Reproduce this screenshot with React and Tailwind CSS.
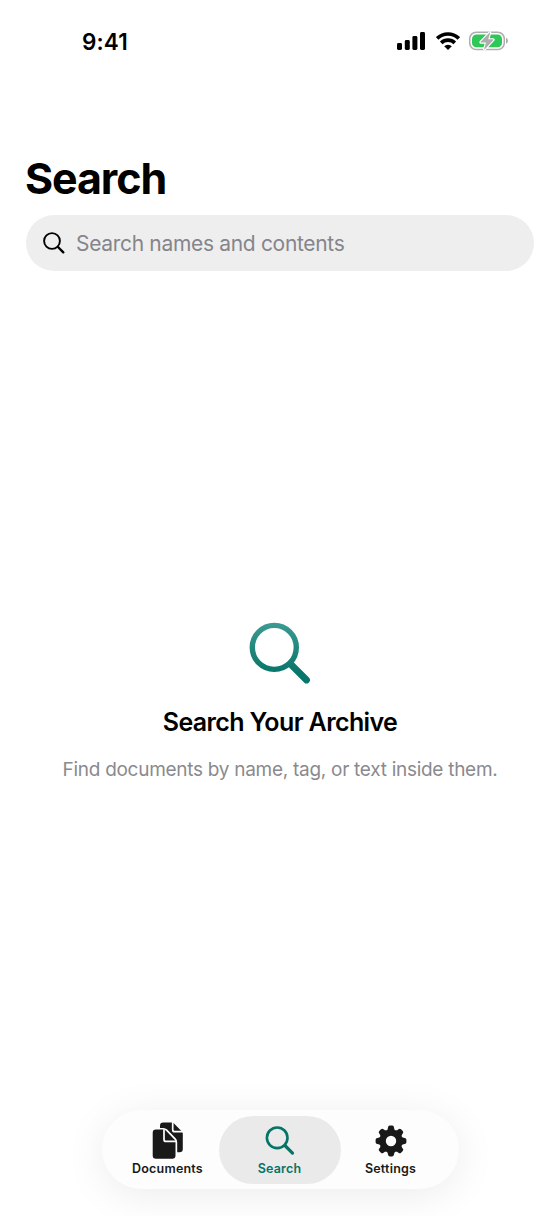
const TEETH = [0, 45, 90, 135, 180, 225, 270, 315]

function SignalIcon() {
  return (
    <svg width="29" height="18" viewBox="0 0 29 18" className="shrink-0">
      <rect x="0" y="11" width="5" height="7" rx="1.4" />
      <rect x="7.8" y="8" width="5" height="10" rx="1.4" />
      <rect x="15.4" y="4" width="5" height="14" rx="1.4" />
      <rect x="23" y="0" width="5" height="18" rx="1.4" />
    </svg>
  )
}

function WifiIcon() {
  return (
    <svg width="24" height="18" viewBox="0 0 24 18" className="shrink-0" fill="none" stroke="#000" strokeWidth="3.6">
      <path d="M1.2 6.4a15.4 15.4 0 0 1 21.6 0" />
      <path d="M5.2 10.9a9.8 9.8 0 0 1 13.6 0" />
      <path d="M12 18 8.2 14.2a5.4 5.4 0 0 1 7.6 0z" fill="#000" stroke="none" />
    </svg>
  )
}

function BatteryIcon() {
  return (
    <svg width="40" height="20" viewBox="0 0 40 20" className="shrink-0">
      <rect x="0.7" y="1.2" width="34.6" height="17.4" rx="6.6" fill="none" stroke="#aeaeae" strokeWidth="1.5" />
      <path d="M37 6.8c2.6 1 2.6 5 0 6z" fill="#aeaeae" />
      <rect x="3" y="3.5" width="30" height="12.8" rx="4.4" fill="#30c759" />
      <path
        d="M20.6 1.4 11.6 10.8q-.5.8.4.8h5l-1.8 6.5q0 .8.7.2L24.4 9.1q.5-.8-.4-.8h-4.8l2-6.5q0-.8-.6-.4z"
        fill="#aeaeae" stroke="#fff" strokeWidth="2.2" strokeLinejoin="round" paintOrder="stroke"
      />
    </svg>
  )
}

function DocumentsIcon() {
  return (
    <svg width="32" height="38" viewBox="0 0 32 38" fill="#191919">
      <path d="M11.2 0.6h8.8a3 3 0 0 1 2 .9l7.9 8c.6.6.9 1.300.9 2.100v15.400a3.200 3.200 0 0 1-3.200 3.200H11.200A3.200 3.200 0 0 1 8 27V3.800A3.200 3.200 0 0 1 11.200.6z" />
      <path d="M20.7 0v7.7a2 2 0 0 0 2 2h9" fill="none" stroke="#fff" strokeWidth="1.7" />
      <path
        d="M3.9 7.6h7.3c1.1 0 2 .4 2.8 1.2l8.4 8.7c.8.8 1.1 1.7 1.1 2.8v13.2a3.2 3.2 0 0 1-3.2 3.200H3.900a3.200 3.200 0 0 1-3.200-3.200V10.800a3.200 3.200 0 0 1 3.200-3.200z"
        stroke="#fff" strokeWidth="3.4" paintOrder="stroke"
      />
      <path d="M12 7.2v10.200a2 2 0 0 0 2 2h10" fill="none" stroke="#fff" strokeWidth="1.700" />
    </svg>
  )
}

function GearIcon() {
  return (
    <svg width="32" height="32" viewBox="-16 -16 32 32" fill="#191919">
      <circle r="8.4" fill="none" stroke="#191919" strokeWidth="6.4" />
      {TEETH.map((angle) => (
        <path
          key={angle}
          d="M-4.4 -10.4Q-3.1 -11.4 -3 -13.6Q-2.9 -15.4 -1.2 -15.4H1.2Q2.9 -15.4 3 -13.6Q3.1 -11.4 4.4 -10.4z"
          transform={`rotate(${angle})`}
        />
      ))}
    </svg>
  )
}

function SearchTabIcon() {
  return (
    <svg width="30" height="30" viewBox="0 0 30 30" fill="none" stroke="#067367" strokeLinecap="round">
      <circle cx="12.2" cy="11.8" r="10.3" strokeWidth="2.6" />
      <path d="m19.9 19.5 7.6 7.6" strokeWidth="3.2" />
    </svg>
  )
}

const TABS = [
  { label: 'Documents', icon: DocumentsIcon },
  { label: 'Search', icon: SearchTabIcon, active: true },
  { label: 'Settings', icon: GearIcon },
]

export default function App() {
  return (
    <div className="w-[560px] h-[1216px] bg-white flex flex-col overflow-hidden font-['Inter',sans-serif] text-black">
      {/* Status bar */}
      <div className="h-[82px] pl-[82px] pr-[51px] flex items-center justify-between shrink-0">
        <span className="pt-px text-[22.5px] leading-[28px] font-semibold tracking-[0.1px]">9:41</span>
        <div className="flex items-center gap-[9.5px]">
          <SignalIcon />
          <WifiIcon />
          <BatteryIcon />
        </div>
      </div>

      {/* Title and search field */}
      <header className="px-[26px] pt-[69px] shrink-0">
        <h1 className="-ml-px text-[43px] leading-[54px] font-bold tracking-[-1.1px]">Search</h1>
        <div className="mt-[10px] h-[56px] rounded-full bg-[#eeeeee] flex items-center pl-[17px] gap-[11px]">
          <svg width="22" height="22" viewBox="0 0 22 22" fill="none" stroke="#000" strokeLinecap="round">
            <circle cx="9" cy="9" r="7.9" strokeWidth="1.9" />
            <path d="m15 15 5.3 5.3" strokeWidth="2.4" />
          </svg>
          <span className="pt-px text-[21px] leading-[28px] tracking-[-0.32px] text-[#85858a] whitespace-nowrap">Search names and contents</span>
        </div>
      </header>

      {/* Empty state */}
      <main className="flex-1 pt-[351px] flex flex-col items-center">
        <svg width="62" height="63" viewBox="0 0 62 63" fill="none" strokeLinecap="round">
          <defs>
            <linearGradient id="lens" gradientUnits="userSpaceOnUse" x1="0" y1="0" x2="0" y2="63">
              <stop offset="0" stopColor="#3d9b92" />
              <stop offset="0.8" stopColor="#08766a" />
              <stop offset="1" stopColor="#08766a" />
            </linearGradient>
          </defs>
          <circle cx="25.3" cy="25.4" r="22" stroke="url(#lens)" strokeWidth="5.4" />
          <path d="m41.5 42 16 16" stroke="url(#lens)" strokeWidth="6.8" />
        </svg>
        <h2 className="mt-[21px] text-[25px] leading-[32px] font-semibold tracking-[-0.62px] whitespace-nowrap">Search Your Archive</h2>
        <p className="mt-[19px] text-[19px] leading-[26px] tracking-[-0.28px] text-[#8a8a8e] whitespace-nowrap">
          Find documents by name, tag, or text inside them.
        </p>
      </main>

      {/* Tab bar */}
      <nav className="mb-[27px] w-[357px] h-[79px] py-[6px] pl-[5px] self-center flex rounded-full bg-[#fdfdfd] shadow-[0_6px_42px_rgba(0,0,0,0.08)] shrink-0">
        {TABS.map(({ label, icon: Icon, active }) => (
          <div
            key={label}
            className={`flex flex-col items-center rounded-full w-[122px] h-[68px] shrink-0
              ${active ? '-ml-[10px] -mr-[11px] bg-[#eaeaea] text-[#067367]' : 'text-[#191919]'}`}
          >
            <div className="h-[42px] mt-[4px] flex items-center justify-center"><Icon /></div>
            <span className="text-[12.5px] leading-[14px] font-semibold tracking-[0.2px]">{label}</span>
          </div>
        ))}
      </nav>
    </div>
  )
}
